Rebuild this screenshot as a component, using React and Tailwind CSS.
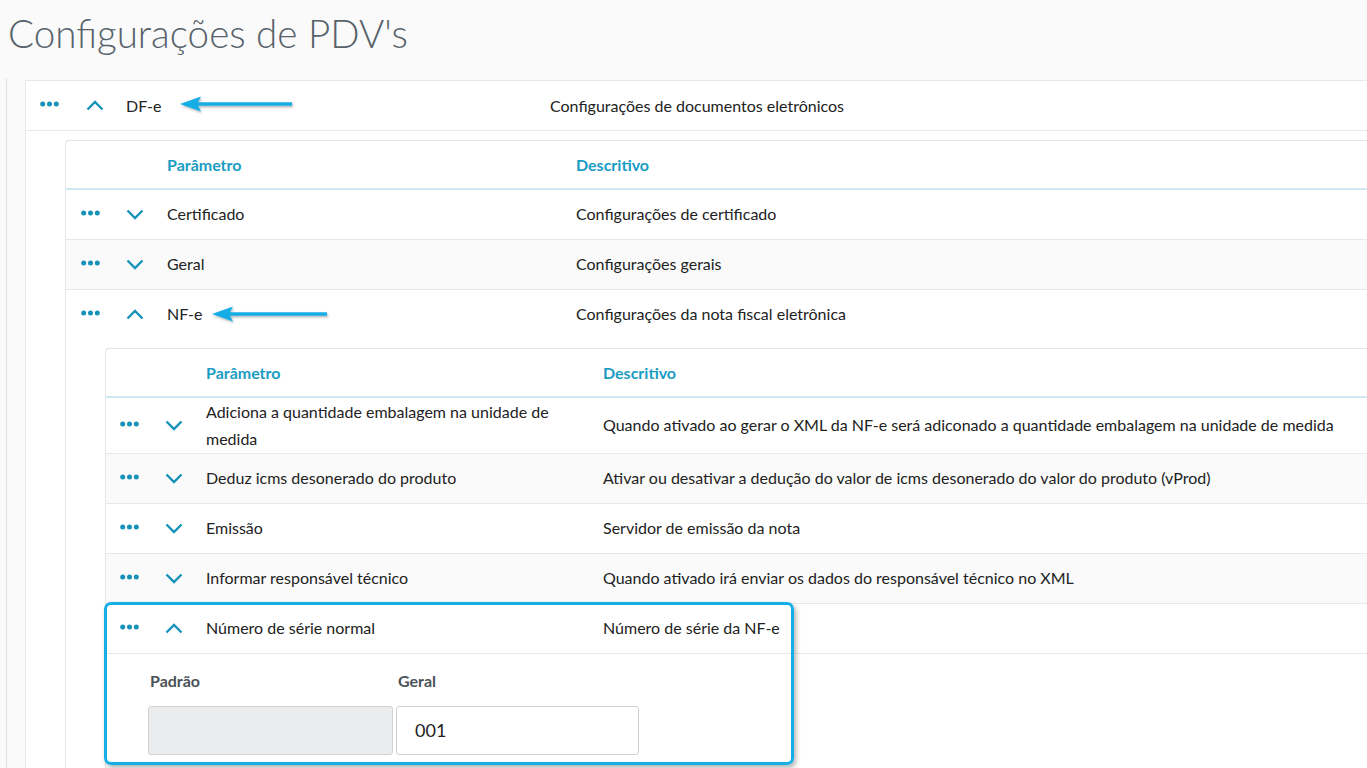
import React from 'react';

const FONT = { fontFamily: 'Lato, "Open Sans", sans-serif' };

function Dots() {
    return (
        <svg width="19" height="6" viewBox="0 0 19 6" className="block">
            <circle cx="2.7" cy="3" r="2.5" fill="#1592b8" />
            <circle cx="9.5" cy="3" r="2.5" fill="#1592b8" />
            <circle cx="16.3" cy="3" r="2.5" fill="#1592b8" />
        </svg>
    );
}

function Chevron({ up }) {
    return (
        <svg width="18" height="11" viewBox="0 0 18 11" className="block">
            <path
                d={up ? 'M1.5 9.5 L9 2 L16.5 9.5' : 'M1.5 1.5 L9 9 L16.5 1.5'}
                fill="none"
                stroke="#1592b8"
                strokeWidth="2.4"
            />
        </svg>
    );
}

// column widths per nesting level
const cols = [
    { pad: 'pl-[14px]', dots: 'w-[46px]', chev: 'w-[40px]', param: 'w-[424px]' },
    { pad: 'pl-[15px]', dots: 'w-[45px]', chev: 'w-[41px]', param: 'w-[409px]' },
    { pad: 'pl-[14px]', dots: 'w-[45px]', chev: 'w-[41px]', param: 'w-[397px]' },
];

function Row({ level, label, desc, open, striped, children }) {
    const c = cols[level];
    return (
        <div className={`${striped ? 'bg-[#fafafa]' : 'bg-white'} border-b border-[#e8e8e8]`}>
            <div className={`flex items-center min-h-[49px] py-px text-[16px] leading-[26.5px] text-[#222] ${c.pad}`}>
                <div className={`${c.dots} flex -mt-[3px]`}><Dots /></div>
                <div className={`${c.chev} flex`}><Chevron up={open} /></div>
                <div className={`${c.param} pr-4`}>{label}</div>
                <div className="flex-1 whitespace-nowrap">{desc}</div>
            </div>
            {children}
        </div>
    );
}

function Header({ level }) {
    const c = cols[level];
    return (
        <div className={`flex items-center h-[49px] border-b-2 border-[#cfe8f1] text-[16px] font-bold text-[#1a9cc3] ${c.pad}`}>
            <div className={c.dots} />
            <div className={c.chev} />
            <div className={c.param}>Parâmetro</div>
            <div className="flex-1">Descritivo</div>
        </div>
    );
}

function Table({ level, children }) {
    return (
        <div className="pl-[39px] pt-[9px]">
            <div className="border-l border-t border-[#e6e6e6] rounded-tl-[4px] bg-white w-[1500px]">
                <Header level={level} />
                {children}
            </div>
        </div>
    );
}

function Arrow({ x, y, len }) {
    return (
        <svg
            className="absolute pointer-events-none"
            style={{ left: x - 4, top: y - 12 }}
            width={len + 12}
            height="26"
            viewBox={`0 0 ${len + 12} 26`}
        >
            <defs>
                <filter id={`sh${x}`} x="-20%" y="-50%" width="140%" height="200%">
                    <feDropShadow dx="1" dy="1.5" stdDeviation="1.3" floodColor="#000" floodOpacity="0.3" />
                </filter>
            </defs>
            <g filter={`url(#sh${x})`}>
                <path d={`M4 12 L25 4.5 L22 10.2 L${len + 4} 10.2 L${len + 4} 13.8 L22 13.8 L25 19.5 Z`} fill="#17ade6" />
            </g>
        </svg>
    );
}

export default function App() {
    return (
        <div className="relative w-[1367px] h-[768px] overflow-hidden bg-[#fafafa]" style={FONT}>
            <h1 className="h-[78px] pl-[8px] pt-[9px] text-[38.6px] font-light leading-[48px] text-[#57626a]">
                Configurações de PDV's
            </h1>

            <div className="ml-[6px] border-l border-[#e0e0e0] pl-[18px] pt-[2px] h-[700px]">
                <div className="border-l border-t border-[#e8e8e8] bg-white h-full">
                    <div className="flex items-center h-[50px] border-b border-[#e8e8e8] pl-[14px] text-[16px] text-[#222]">
                        <div className="w-[46px] flex -mt-[3px]"><Dots /></div>
                        <div className="w-[40px] flex"><Chevron up /></div>
                        <div className="w-[424px]">DF-e</div>
                        <div className="flex-1">Configurações de documentos eletrônicos</div>
                    </div>

                    <Table level={1}>
                        <Row level={1} label="Certificado" desc="Configurações de certificado" />
                        <Row level={1} label="Geral" desc="Configurações gerais" striped />
                        <Row level={1} label="NF-e" desc="Configurações da nota fiscal eletrônica" open>
                            <Table level={2}>
                                <Row
                                    level={2}
                                    label={<>Adiciona a quantidade embalagem na unidade de<br />medida</>}
                                    desc="Quando ativado ao gerar o XML da NF-e será adiconado a quantidade embalagem na unidade de medida"
                                />
                                <Row
                                    level={2}
                                    label="Deduz icms desonerado do produto"
                                    desc="Ativar ou desativar a dedução do valor de icms desonerado do valor do produto (vProd)"
                                    striped
                                />
                                <Row level={2} label="Emissão" desc="Servidor de emissão da nota" />
                                <Row
                                    level={2}
                                    label="Informar responsável técnico"
                                    desc="Quando ativado irá enviar os dados do responsável técnico no XML"
                                    striped
                                />
                                <Row level={2} label="Número de série normal" desc="Número de série da NF-e" open>
                                    <div className="border-t border-[#e8e8e8] pl-[42px] pt-[15px] pb-[20px] flex gap-[3px] text-[#4a5258]">
                                        <div className="w-[245px]">
                                            <div className="pl-[2px] h-[37px] text-[16px] font-bold">Padrão</div>
                                            <div className="h-[49px] rounded-[3px] border border-[#cfd1d2] bg-[#ebeced]" />
                                        </div>
                                        <div className="w-[243px]">
                                            <div className="pl-[2px] h-[37px] text-[16px] font-bold">Geral</div>
                                            <div className="h-[49px] rounded-[3px] border border-[#cfd1d2] bg-white flex items-center pl-[18px] text-[18px] text-[#222]">
                                                001
                                            </div>
                                        </div>
                                    </div>
                                </Row>
                            </Table>
                        </Row>
                    </Table>
                </div>
            </div>

            <Arrow x={180} y={104} len={112} />
            <Arrow x={212} y={314} len={115} />

            <div className="absolute left-[104px] top-[602px] w-[690px] h-[163px] rounded-[7px] border-[3px] border-[#15aee6] shadow-[2px_3px_5px_rgba(0,0,0,0.3)] pointer-events-none" />
        </div>
    );
}
